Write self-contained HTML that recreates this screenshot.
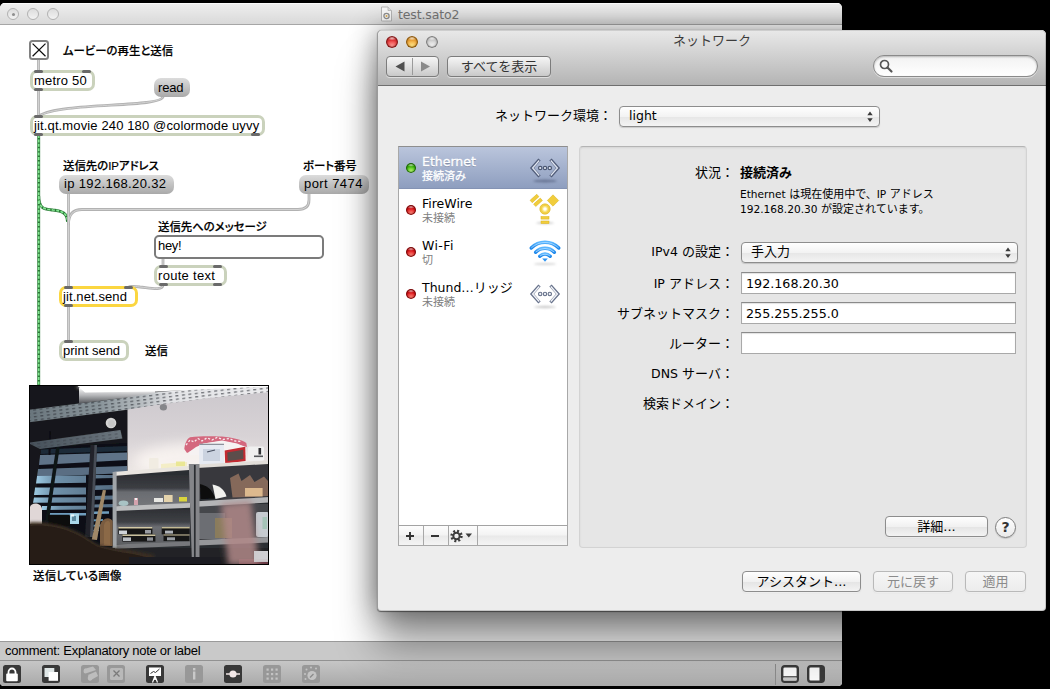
<!DOCTYPE html>
<html lang="ja">
<head>
<meta charset="utf-8">
<title>test.sato2</title>
<style>
*{box-sizing:border-box;margin:0;padding:0}
html,body{width:1050px;height:689px;overflow:hidden;background:#000}
body{position:relative;font-family:"Liberation Sans","Noto Sans CJK JP",sans-serif;color:#000}
.abs{position:absolute}
/* ---------- Max window ---------- */
#max{position:absolute;left:0;top:3px;width:842px;height:683px;background:#fff;border-radius:5px 5px 4px 4px;overflow:hidden}
#max .tbar{position:absolute;left:0;top:0;width:842px;height:22px;background:linear-gradient(#efefef,#d9d9d9);border-bottom:1px solid #a6a6a6;box-shadow:inset 0 1px 0 #fafafa}
#max .tl{position:absolute;top:5px;width:12px;height:12px;border-radius:50%;border:1px solid #b1b1b1;background:linear-gradient(#dcdcdc,#f2f2f2)}
#max .title{position:absolute;left:398px;top:4px;font-family:"DejaVu Sans","Liberation Sans",sans-serif;font-size:12.5px;line-height:16px;color:#757575;white-space:nowrap;letter-spacing:-.13px}
#max .status{position:absolute;left:0;top:638px;width:842px;height:19px;background:#c9c9c9;border-top:1px solid #9a9a9a;font-size:13px;line-height:18px;padding-left:5px;white-space:nowrap}
#max .tools{position:absolute;left:0;top:657px;width:842px;height:26px;background:linear-gradient(#c6c6c6,#a9a9a9);border-top:1px solid #929292}
.ico{position:absolute;top:4px;width:18px;height:18px;border-radius:3px;background:#333}
.ico.l{background:#9a9a9a}
/* patch objects */
.obj{position:absolute;height:21px;border:3px solid #cad2bc;border-radius:7px;background:#fff;font-size:13px;line-height:15px;padding-left:1px;white-space:nowrap}
.msg{position:absolute;height:19px;border-radius:7px;background:linear-gradient(#dcdcdc,#a9a9a9);font-size:13px;line-height:18px;padding-left:5px;white-space:nowrap}
.cmt{position:absolute;font-size:11.4px;line-height:14px;white-space:nowrap;font-weight:500;font-feature-settings:"palt";-webkit-text-stroke:.2px #000}
.io{position:absolute;width:9px;height:3px;border-radius:1.5px;background:#6a6a6a}

/* ---------- Network window ---------- */
#net{font-family:"DejaVu Sans","Liberation Sans","Noto Sans CJK JP",sans-serif;position:absolute;left:377px;top:30px;width:669px;height:581px;border-left:1px solid #b9b9b9;background:#ededed;border-radius:5px 5px 4px 4px;box-shadow:0 34px 40px rgba(0,0,0,.4),0 0 28px rgba(0,0,0,.45),0 .5px 1px rgba(0,0,0,.45);font-size:13px}
#net::after{content:'';position:absolute;left:-1px;top:0;right:0;bottom:0;border-radius:5px 5px 4px 4px;box-shadow:inset 0 0 0 1px rgba(0,0,0,.16);pointer-events:none}
#net .nbar{position:absolute;left:0;top:0;width:668px;height:56px;border-radius:5px 5px 0 0;background:linear-gradient(#e9e9e9,#b4b4b4);border-bottom:1px solid #6f6f6f;box-shadow:inset 0 1px 0 #f6f6f6}
#net .ntl{position:absolute;top:6px;width:12px;height:12px;border-radius:50%}
#net .ntitle{position:absolute;left:0;top:2px;width:668px;text-align:center;font-size:13px;line-height:18px;color:#3c3c3c}
.btn{position:absolute;height:21px;border:1px solid #8d8d8d;border-radius:4px;background:linear-gradient(#fefefe,#f1f1f1 50%,#e4e4e4 51%,#f3f3f3);box-shadow:0 1px 0 rgba(255,255,255,.6),0 1px 1px rgba(0,0,0,.12);text-align:center;font-size:13px;line-height:19px;white-space:nowrap}
.btn.dis{color:#8b8b8b;border-color:#b9b9b9;background:linear-gradient(#f6f6f6,#ececec)}
.tbtn{position:absolute;height:21px;border:1px solid #7c7c7c;border-radius:4px;background:linear-gradient(#f6f6f6,#c9c9c9);box-shadow:0 1px 0 rgba(255,255,255,.5);text-align:center;font-size:13px;line-height:19px;color:#333;white-space:nowrap}
.lbl{position:absolute;text-align:right;white-space:nowrap;font-size:13px;line-height:18px}
.fld{position:absolute;left:363px;width:275px;height:22px;background:#fff;border:1px solid #a9a9a9;border-top-color:#8a8a8a;font-size:13px;line-height:22px;padding-left:4px;box-shadow:inset 0 1px 1px rgba(0,0,0,.12)}
.pop{position:absolute;height:21px;border:1px solid #8d8d8d;border-radius:4px;background:linear-gradient(#fefefe,#f3f3f3 50%,#e6e6e6 51%,#f4f4f4);box-shadow:0 1px 1px rgba(0,0,0,.15);font-size:13px;line-height:18px;padding-left:9px;white-space:nowrap}
.pop svg{position:absolute;right:5px;top:3px}
.row{position:absolute;left:0;width:168px;height:42px}
.row .dot{position:absolute;left:7px;top:16px;width:10px;height:10px;border-radius:50%}
.row .n{position:absolute;left:23px;top:7px;font-size:13px;line-height:16px;white-space:nowrap}
.row .s{position:absolute;left:23px;top:23px;font-size:11px;line-height:13px;color:#808080;white-space:nowrap}
.red{background:radial-gradient(ellipse 42% 20% at 50% 18%,rgba(255,255,255,.75) 0,rgba(255,255,255,0) 100%),radial-gradient(ellipse 58% 48% at 50% 84%,#ff8f80 0,rgba(255,255,255,0) 100%),linear-gradient(#b80d12,#e3181c 55%);box-shadow:inset 0 0 0 1px rgba(110,0,0,.8),inset 0 0 2px 1px rgba(110,0,0,.8)}
.grn{background:radial-gradient(ellipse 42% 20% at 50% 18%,rgba(255,255,255,.75) 0,rgba(255,255,255,0) 100%),radial-gradient(ellipse 58% 48% at 50% 84%,#c4ff7a 0,rgba(255,255,255,0) 100%),linear-gradient(#2f9a08,#45c010 55%);box-shadow:inset 0 0 0 1px rgba(20,90,0,.8),inset 0 0 2px 1px rgba(20,90,0,.8)}
#net .la{font-size:12.5px}
#net .fld.la{font-size:12.7px}
</style>
</head>
<body>
<div id="max">
  <div class="tbar">
    <div class="tl" style="left:7px"><div class="abs" style="left:3.500px;top:3.500px;width:3px;height:3px;border-radius:50%;background:#8f8f8f"></div></div>
    <div class="tl" style="left:27px"></div>
    <div class="tl" style="left:47px"></div>
    <svg class="abs" style="left:380px;top:3px" width="13" height="16" viewBox="0 0 13 16"><path d="M1.500 1H8L11.500 4.500V15H1.500Z" fill="#f7f7f7" stroke="#b5b5b5" stroke-width="1"/><path d="M8 1V4.500H11.500" fill="#e2e2e2" stroke="#b5b5b5" stroke-width=".8"/><circle cx="6.500" cy="10" r="2.600" fill="none" stroke="#8f8f8f" stroke-width="1.300"/><circle cx="6.500" cy="10" r="1" fill="#d9a94a"/></svg>
    <div class="title">test.sato2</div>
  </div>
  <div id="patch" class="abs" style="left:0;top:-3px;width:842px;height:689px">
    <svg class="abs" style="left:0;top:0" width="842" height="689" viewBox="0 0 842 689" fill="none">
      <g stroke="#2a7936" stroke-width="2.900">
        <path d="M38.700 135V386"/>
        <path d="M38.700 196C38.700 210 46 209 53 210C62 211 67.500 213 67.500 222"/>
      </g>
      <g stroke="#84e592" stroke-width="1.700" stroke-dasharray="3 1.400">
        <path d="M38.700 135V386"/>
        <path d="M38.700 196C38.700 210 46 209 53 210C62 211 67.500 213 67.500 222"/>
      </g>
      <g stroke="#b2b2b2" stroke-width="2.800" stroke-linecap="round">
        <path d="M38.500 60V71"/>
        <path d="M38.5 90V116"/>
        <path d="M163 97C160 108 60 102 39 116"/>
        <path d="M68.5 194V288"/>
        <path d="M309 194V200Q309 209.500 298 209.500H82Q68.500 209.500 68.500 224"/>
        <path d="M163 258V266"/>
        <path d="M163 285C163 291 150 288 140 287C134 286 128 286 128 288"/>
        <path d="M68.5 306V342"/>
      </g>
      <g stroke="#d2d2d2" stroke-width="1" stroke-linecap="round">
        <path d="M38.500 60V71"/>
        <path d="M38.5 90V116"/>
        <path d="M163 97C160 108 60 102 39 116"/>
        <path d="M68.5 194V288"/>
        <path d="M309 194V200Q309 209.500 298 209.500H82Q68.500 209.500 68.500 224"/>
        <path d="M163 258V266"/>
        <path d="M163 285C163 291 150 288 140 287C134 286 128 286 128 288"/>
        <path d="M68.5 306V342"/>
      </g>
    </svg>
    <!-- toggle -->
    <div class="abs" style="left:29px;top:40px;width:20px;height:20px;border:2px solid #818181;border-radius:3.500px;background:#fff">
      <svg class="abs" style="left:0;top:0" width="16" height="16" viewBox="0 0 16 16"><path d="M1.600 1.600L14.500 14.300M14.500 1.600L1.600 14.300" stroke="#111" stroke-width="1.250"/></svg>
    </div>
    <div class="cmt" style="left:63px;top:44px">ムービーの再生と送信</div>
    <div class="obj" style="left:30px;top:70px;width:65px;letter-spacing:.19px">metro 50</div>
    <div class="io" style="left:34px;top:70px"></div><div class="io" style="left:82px;top:70px"></div><div class="io" style="left:34px;top:88px"></div>
    <div class="msg" style="left:154px;top:78px;width:36px;padding-left:4px;letter-spacing:-.2px;line-height:20px">read</div>
    <div class="obj" style="left:30px;top:115px;width:235px;letter-spacing:.13px">jit.qt.movie 240 180 @colormode uyvy</div>
    <div class="io" style="left:34px;top:115px"></div><div class="io" style="left:34px;top:133px"></div><div class="io" style="left:251px;top:133px"></div>
    <div class="cmt" style="left:63px;top:159px">送信先のIPアドレス</div>
    <div class="msg" style="left:59px;top:175px;width:115px;letter-spacing:.34px">ip 192.168.20.32</div>
    <div class="cmt" style="left:303px;top:159px">ポート番号</div>
    <div class="msg" style="left:299px;top:175px;width:70px;letter-spacing:.43px">port 7474</div>
    <div class="cmt" style="left:158px;top:220px">送信先へのメッセージ</div>
    <div class="abs" style="left:154px;top:235px;width:170px;height:24px;border:2px solid #7b7b7b;border-radius:5px;background:#fff;font-size:13px;line-height:18px;padding-left:2px;letter-spacing:-.3px">hey!</div>
    <div class="obj" style="left:154px;top:265px;width:73px;letter-spacing:.3px">route text</div>
    <div class="io" style="left:159px;top:265px"></div><div class="io" style="left:213px;top:265px"></div><div class="io" style="left:159px;top:283px"></div><div class="io" style="left:213px;top:283px"></div>
    <div class="obj" style="left:59px;top:286px;width:79px;border-color:#fbd640;letter-spacing:.09px">jit.net.send</div>
    <div class="io" style="left:64px;top:286px"></div><div class="io" style="left:124px;top:286px"></div><div class="io" style="left:64px;top:304px"></div>
    <div class="obj" style="left:59px;top:340px;width:70px">print send</div>
    <div class="io" style="left:64px;top:340px"></div>
    <div class="cmt" style="left:145px;top:344px">送信</div>
    <!--PHOTO--><svg class="abs" style="left:29px;top:385px" width="240" height="180" viewBox="0 0 240 180">
  <defs>
    <filter id="b1" x="-5%" y="-5%" width="110%" height="110%"><feGaussianBlur stdDeviation="0.650"/></filter>
    <filter id="b2" x="-20%" y="-20%" width="140%" height="140%"><feGaussianBlur stdDeviation="1.600"/></filter>
    <filter id="b3" x="-20%" y="-20%" width="140%" height="140%"><feGaussianBlur stdDeviation="3"/></filter>
    <filter id="b6" x="-30%" y="-30%" width="160%" height="160%"><feGaussianBlur stdDeviation="6"/></filter>
    <pattern id="perf" width="6.500" height="3.400" patternUnits="userSpaceOnUse" patternTransform="rotate(-7)"><rect x="1" y="1" width="3" height="1.100" fill="#2c3036" opacity=".75"/></pattern>
    <linearGradient id="tray" x1="0" y1="0" x2="1" y2="0"><stop offset="0" stop-color="#69757c"/><stop offset=".3" stop-color="#8a959b"/><stop offset=".45" stop-color="#b2b8bc"/><stop offset=".6" stop-color="#e2e3e6"/><stop offset="1" stop-color="#ececee"/></linearGradient>
    <linearGradient id="tray2" x1="0" y1="0" x2="1" y2="0"><stop offset="0" stop-color="#46505a"/><stop offset="1" stop-color="#6c767e"/></linearGradient>
    <linearGradient id="wall" x1="0" y1="0" x2="0" y2="1"><stop offset="0" stop-color="#cbc7cc"/><stop offset=".55" stop-color="#d8d3d6"/><stop offset="1" stop-color="#efe9e6"/></linearGradient>
    <linearGradient id="cellL" x1="0" y1="0" x2="0" y2="1"><stop offset="0" stop-color="#2e3034"/><stop offset=".42" stop-color="#3c3e43"/><stop offset=".55" stop-color="#6a6c71"/><stop offset="1" stop-color="#74767a"/></linearGradient>
    <linearGradient id="cellM" x1="0" y1="0" x2="0" y2="1"><stop offset="0" stop-color="#303236"/><stop offset=".35" stop-color="#3e4045"/><stop offset=".5" stop-color="#6c6e73"/><stop offset="1" stop-color="#5c5e62"/></linearGradient>
    <linearGradient id="stripe" x1="0" y1="0" x2="1" y2="0"><stop offset="0" stop-color="#9cc9e2"/><stop offset=".25" stop-color="#6f91aa"/><stop offset="1" stop-color="#566c82"/></linearGradient>
    <linearGradient id="glow" x1="0" y1="0" x2="0" y2="1"><stop offset="0" stop-color="#f4f4f4"/><stop offset=".45" stop-color="#b9babd"/><stop offset="1" stop-color="#55575b"/></linearGradient>
    <clipPath id="pc"><rect x="1" y="1" width="238" height="178"/></clipPath>
  </defs>
  <rect width="240" height="180" fill="#000"/>
  <g clip-path="url(#pc)"><g filter="url(#b1)">
    <rect x="0" y="0" width="240" height="180" fill="#19191c"/>
    <!-- wall -->
    <path d="M98.500 10L240 0V92L98.500 94Z" fill="url(#wall)"/>
    <ellipse cx="165" cy="76" rx="60" ry="18" fill="#fffaf6" opacity=".7" filter="url(#b6)"/>
    <!-- window blinds -->
    <path d="M12 62L98 58V162H2Z" fill="#0b0f16"/>
    <path d="M12 64.500L98 61V66L11.500 69Z" fill="#1d2a38"/>
    <g fill="#7d92a7">
      <path d="M11 70L98 67.500V75L10 80Z" fill="#5f7388"/>
      <path d="M9 84L98 81V88L8 92Z" fill="#5a6e83"/>
      <path d="M8 91L57 90.500V97.800L7 98.500Z M64 90V93.500L84 93V90Z" fill="url(#stripe)"/>
      <path d="M6 102.500L57 102.400V109.600L5 110Z M64 100.400L84 100V104.600L64 105Z" fill="url(#stripe)"/>
      <path d="M5 112.500L57 112.200V117.400L4 117.800Z M64 110.900L84 110.500V114.400L64 114.800Z" fill="url(#stripe)"/>
      <path d="M13 121L57 120.700V124.600L13 125Z M64 119.400L84 119V122.300L64 122.600Z" fill="url(#stripe)"/>
      <path d="M20 128L57 127.900V130.500L20 130.700Z M64 126.500L80 126.300V128.800L64 129Z" fill="#6f9dbd"/>
      <path d="M58 134.500L74 134V136L58 136.500Z M58 140L72 139.600V141.400L58 141.800Z M58 145L70 144.700V146L58 146.300Z" fill="#5f8fae"/>
    </g>
    <!-- mullions -->
    <path d="M61.500 60H68L64 152H56Z" fill="#20242a"/><path d="M65.500 60H68L64 152H61Z" fill="#464c54"/>
    <path d="M27.500 60H31L19.600 138H15.700Z" fill="#111317"/>
    <path d="M20 46H22L21.500 70H19.500Z" fill="#0e0f12"/>
    <path d="M0 58L12 62L3 120H0Z" fill="#16171a"/>
    <!-- second tray -->
    <path d="M1 57.500L91.400 45L93.400 53.500L11 64L1 59Z" fill="url(#tray2)"/>
    <path d="M1 57.500L91.400 45L93.400 53.500L11 64L1 59Z" fill="url(#perf)" opacity=".55"/>
    <!-- upper tray -->
    <path d="M0 24.800L98 12.400L120 7.800L180 3L240 0.500V7.200L180 13L120 21L98 24.800L0 37.200Z" fill="url(#tray)"/>
    <path d="M0 24.800L98 12.400L120 7.800L180 3L240 0.500V7.200L180 13L120 21L98 24.800L0 37.200Z" fill="url(#perf)"/>
    <!-- ceiling light -->
    <path d="M50 3L126 3V8L98 12.400L50 18.500Z" fill="url(#glow)" filter="url(#b1)"/>
    <path d="M47.500 0H240V1.500L125 6.500L56 7.500Z" fill="#fff"/>
    <ellipse cx="110" cy="2" rx="62" ry="4.500" fill="#fff" opacity=".75" filter="url(#b2)"/>
    <!-- smoke detector and dome -->
    <circle cx="82" cy="38" r="5.300" fill="#d4d4d4"/><circle cx="82.500" cy="38.500" r="3.400" fill="#c6c6c6"/>
    <ellipse cx="134.400" cy="22.300" rx="3.600" ry="3.200" fill="#85868a"/>
    <!-- shelf unit back -->
    <path d="M86 88L240 77V180H86Z" fill="#2c2e32"/>
    <rect x="87" y="90" width="74" height="31" fill="url(#cellL)"/>
    <rect x="87" y="125" width="74" height="34" fill="url(#cellM)"/>
    <rect x="168" y="80" width="72" height="34" fill="#37393e"/>
    <path d="M168 119H240V154H168Z" fill="#45474c"/>
    <rect x="170" y="128" width="26" height="26" fill="#6c6e73"/>
    <rect x="87" y="163" width="153" height="17" fill="#232427"/>
    <!-- items on top of shelf (left) -->
    <rect x="120" y="73" width="9.500" height="11" rx="1" fill="#f1ece2"/>
    <path d="M132 79L158 77V82L132 84Z" fill="#f3ecc0" opacity=".85"/>
    <rect x="147" y="76.500" width="9" height="4.500" fill="#e9e58e" opacity=".9"/>
    <!-- cloth + boxes -->
    <path d="M155.300 64C156 58 158 53.500 161 52.200C172 50.800 184 51.200 193 51.600C204 52.600 213 55 217.300 58L218 62L206 58.500L193 56L174 58.500L166 64L158 68Z" fill="#d4687e"/>
    <path d="M157 60L161 55L165 57L169 53.500L173 56L178 52.800L183 55L188 52.500L194 54.500L200 53.500L206 56L212 56.500" fill="none" stroke="#f6e9ec" stroke-width="1.300" stroke-dasharray="2.200 1.800"/>
    <path d="M160 67L167 62L175 58.500L193 55.500L208 58.500L217 62.500V70H160Z" fill="#f6f2f2"/>
    <rect x="170.300" y="58.800" width="24.700" height="21" fill="#e6eaf2"/><path d="M170.300 59.300H195" stroke="#6a6e78" stroke-width=".9"/>
    <rect x="174" y="64" width="17" height="12" fill="#cbd3e0"/><path d="M178 67L186 65" stroke="#4a5262" stroke-width="1.200"/>
    <path d="M195.700 65.500L216.300 61.800L216.600 76L196.200 78.500Z" fill="#c22a30"/>
    <path d="M198.300 67.500L214.200 64.700L214.400 74L198.700 76Z" fill="#5b4e4c"/>
    <rect x="219" y="61.400" width="16" height="14.300" rx="1.500" fill="#f0f0f0"/><rect x="229.500" y="63" width="2.600" height="6.500" fill="#2e2e30"/><rect x="225" y="70.500" width="9" height="1.600" fill="#55565a"/>
    <!-- shelves -->
    <path d="M84 87L160 81V85L84 91Z" fill="#e9e5df"/>
    <path d="M167.700 79.500L240 75.500V79L167.700 83Z" fill="#e2ded9"/>
    <path d="M86 121.300L161 118V122.800L86 126Z" fill="#bdbebf"/>
    <path d="M168 116.200L240 112V117.500L168 121.700Z" fill="#b4b5b7"/>
    <path d="M86 159.500L161 156.500V160.800L86 163.800Z" fill="#77787b"/>
    <path d="M168 155L240 152V157.500L168 160.500Z" fill="#96979a"/>
    <!-- posts -->
    <rect x="83.600" y="87" width="4" height="76" fill="#a1a5a9"/>
    <path d="M159.800 79H170.500V180H163Z" fill="#85868a"/><path d="M165.800 80V180" stroke="#2c2d30" stroke-width="1.700"/>
    <!-- items in cells -->
    <ellipse cx="94.500" cy="118.200" rx="4.800" ry="2.700" fill="#a9c3c4"/>
    <rect x="105" y="113" width="4" height="7" fill="#d4a3ad"/><rect x="106" y="113" width="2" height="2" fill="#f3f3f3"/>
    <rect x="125" y="113" width="9" height="4" fill="#e8e8e4"/>
    <rect x="135" y="110" width="8.600" height="7" fill="#e4d3ac"/>
    <rect x="150" y="112" width="8" height="4.500" fill="#d9d43c"/>
    <g>
      <rect x="89.400" y="142" width="34" height="7.400" fill="#121212"/><rect x="93.400" y="149.400" width="33" height="7.200" fill="#161616"/>
      <path d="M89.400 142.800H123.400" stroke="#d3c9a6" stroke-width="1.600"/><path d="M93.400 150.200H126.400" stroke="#c9bf9c" stroke-width="1.500"/>
      <rect x="90" y="145.500" width="8" height="3.600" fill="#cfd3d8"/><rect x="94" y="152.400" width="8" height="3.600" fill="#b9bdc2"/>
      <rect x="116" y="145" width="6" height="3.500" fill="#9a9da3"/><rect x="118" y="152.400" width="6" height="3.300" fill="#8d9096"/>
      <rect x="132.700" y="142" width="28" height="7.300" fill="#121212"/><rect x="134.500" y="149.300" width="26" height="6.800" fill="#161616"/>
      <path d="M132.700 142.700H160.700" stroke="#c3b994" stroke-width="1.500"/><path d="M134.500 150H160.500" stroke="#a89e80" stroke-width="1.300"/>
      <rect x="136" y="145.600" width="8" height="3" fill="#aeb2b8"/><rect x="138" y="152.300" width="8" height="3" fill="#9a9ea4"/>
    </g>
    <path d="M171 99C180 101 184.500 107 186 113.800L171.500 114Z" fill="#0c0c0e"/>
    <path d="M183.500 99.500C192 101 196 106 197.500 111.500L186.500 114Z" fill="#f1f1ee"/>
    <path d="M201 93L209.500 88.500L212.500 96L221 90L225.500 97L235 91.500L239 96V111L203.500 112.500Z" fill="#85695a"/>
    <rect x="216" y="103" width="17.600" height="8.500" fill="#dcb98e"/>
    <rect x="186" y="133" width="17" height="20" fill="#8a7c5c"/>
    <rect x="227" y="127" width="13" height="25" rx="2" fill="#c6cbd0"/><rect x="233.500" y="132" width="4.500" height="12" fill="#8fc0a8" opacity=".6"/>
    <rect x="225" y="166" width="14" height="10" fill="#cfcfd3"/>
    <path d="M210 174H240V180H210Z" fill="#9a4a58" opacity=".6"/>
    <!-- pink blur (finger) -->
    
    <!-- stick and brown object -->
    <path d="M73.800 105L77 105.300L68 155L62.700 154.500Z" fill="#a08868"/>
    <path d="M71 161V141C72 134 80 130.500 83.600 136V161Z" fill="#7a5c40"/><path d="M75 160V140C76 136 80 134.500 81 138V160Z" fill="#8b6947"/>
    <!-- monitor -->
    <rect x="19.600" y="129.800" width="21" height="11" fill="#09090b"/>
    <rect x="41" y="128.500" width="9" height="10.500" fill="#a9d7ea"/><rect x="43" y="131" width="4" height="5" fill="#5d8aa0"/><rect x="42" y="129.500" width="3" height="2" fill="#e9f7fc"/>
    <!-- white object at left -->
    <path d="M1 122C2 117.500 11.500 117 13 123.500V139H1Z" fill="#e0d7d7"/>
    <!-- dark hair blob -->
    <path d="M0 137.500C14 136.500 26 138.500 38 142.500C50 147 58 152 66 158C74 162 84 163.500 100 165L125 170V180H0Z" fill="#3a2d24" filter="url(#b2)"/>
    <path d="M0 141C16 139.500 30 142 42 147C54 152 60 157 68 161.500C78 165 90 167 104 169L130 175V180H0Z" fill="#261d17" filter="url(#b1)"/>
    <rect x="100" y="172" width="100" height="8" fill="#1e1e21"/>
    <path d="M192 119L222 116L230 180H199Z" fill="#b08888" opacity=".85" filter="url(#b3)"/>
    <rect x="225" y="166" width="14" height="11" fill="#cfcfd3" opacity=".9"/>
  </g></g>
  <rect x=".5" y=".5" width="239" height="179" fill="none" stroke="#000" stroke-width="1"/>
</svg><!--/PHOTO-->
    <div class="cmt" style="left:33px;top:569px;letter-spacing:.3px">送信している画像</div>
  </div>
  <div class="status" style="letter-spacing:-.27px">comment: Explanatory note or label</div>
  <div class="tools">
    <svg class="abs" style="left:0;top:0" width="842" height="26" viewBox="0 0 842 26">
      <g fill="#383838">
        <rect x="3" y="4" width="18" height="18" rx="2.500"/><rect x="42" y="4" width="18" height="18" rx="2.500"/>
        <rect x="146" y="4" width="18" height="18" rx="2.500"/><rect x="224" y="4" width="18" height="18" rx="2.500"/>
      </g>
      <g fill="#989898">
        <rect x="81" y="4" width="18" height="18" rx="2.500"/><rect x="107" y="4" width="18" height="18" rx="2.500"/>
        <rect x="185" y="4" width="18" height="18" rx="2.500"/><rect x="263" y="4" width="18" height="18" rx="2.500"/><rect x="302" y="4" width="18" height="18" rx="2.500"/>
      </g>
      <!-- lock -->
      <rect x="6.200" y="12.600" width="11.600" height="7.600" rx="1" fill="#fff"/>
      <path d="M8.500 13V11A3.500 3.500 0 0 1 15.500 11V13" fill="none" stroke="#fff" stroke-width="1.800"/>
      <!-- overlapping squares -->
      <rect x="44.500" y="7" width="9.800" height="9" fill="#dfe6e6"/><rect x="48.600" y="11" width="9.400" height="8.800" fill="#fff"/>
      <!-- binoculars -->
      <g fill="#bdbdbd"><path d="M84 8L93 5.500L96 9L87 12Z"/><ellipse cx="85.500" cy="10" rx="2" ry="2.600"/><path d="M88 14L96 10.500L98 15L91 19Z"/><ellipse cx="90" cy="17" rx="2.200" ry="2.800"/></g>
      <!-- x box -->
      <rect x="110" y="7" width="13" height="12" rx="1.500" fill="#b9b9b9"/><path d="M113.500 9.500L119.500 15.500M119.500 9.500L113.500 15.500" stroke="#7a7a7a" stroke-width="1.300"/>
      <!-- presentation -->
      <rect x="149" y="6.500" width="12" height="8.500" fill="#fff"/><path d="M150.500 12.500L153.500 10.500L155.500 11.500L159.500 8" fill="none" stroke="#333" stroke-width="1"/>
      <path d="M155 15L152.500 21.500M155 15L157.500 21.500M155 15V19" stroke="#fff" stroke-width="1.200" fill="none"/>
      <!-- info -->
      <rect x="193" y="10.500" width="2.400" height="8" fill="#c9c9c9"/><rect x="193" y="7" width="2.400" height="2.400" fill="#c9c9c9"/>
      <!-- line with circle -->
      <path d="M226 13H240" stroke="#f1e6e6" stroke-width="1.600"/><circle cx="233" cy="13" r="3.600" fill="#f1e6e6"/>
      <!-- grid -->
      <g fill="#c4c4c4"><rect x="266.500" y="7.500" width="2.200" height="2.200"/><rect x="271" y="7.500" width="2.200" height="2.200"/><rect x="275.500" y="7.500" width="2.200" height="2.200"/><rect x="266.500" y="12" width="2.200" height="2.200"/><rect x="271" y="12" width="2.200" height="2.200"/><rect x="275.500" y="12" width="2.200" height="2.200"/><rect x="266.500" y="16.500" width="2.200" height="2.200"/><rect x="271" y="16.500" width="2.200" height="2.200"/><rect x="275.500" y="16.500" width="2.200" height="2.200"/></g>
      <!-- dial -->
      <circle cx="312" cy="14.500" r="4.600" fill="#c4c4c4"/><path d="M310 16.500L313.500 13" stroke="#8a8a8a" stroke-width="1.200"/>
      <g fill="#c4c4c4"><circle cx="305" cy="13" r="1"/><circle cx="306.500" cy="8.500" r="1"/><circle cx="311" cy="6.500" r="1"/><circle cx="316" cy="7.500" r="1"/><circle cx="305.500" cy="18" r="1"/></g>
      <!-- right side -->
      <path d="M775.500 3V24" stroke="#8c8c8c" stroke-width="1"/>
      <rect x="782.200" y="5.200" width="15.600" height="15.600" rx="2.500" fill="#fafafa" stroke="#3a3a3a" stroke-width="2.400"/><rect x="783" y="15.200" width="14" height="1.400" fill="#3a3a3a"/><rect x="783.400" y="16.600" width="13.200" height="3" fill="#c9c9c9"/>
      <rect x="808.200" y="5.200" width="15.600" height="15.600" rx="2.500" fill="#fafafa" stroke="#3a3a3a" stroke-width="2.400"/><rect x="819.500" y="6" width="4" height="14" fill="#3a3a3a"/>
    </svg>
  </div>
</div>
<div id="net">
  <div class="nbar">
    <div class="ntl" style="left:8px;background:radial-gradient(ellipse 42% 20% at 50% 17%,rgba(255,255,255,.8) 0,rgba(255,255,255,0) 100%),radial-gradient(ellipse 58% 48% at 50% 84%,#ffa09a 0,rgba(255,255,255,0) 100%),linear-gradient(#c9292c,#ea3b3d 55%);box-shadow:inset 0 0 0 1px rgba(120,20,20,.85),inset 0 0 2px 1px rgba(120,20,20,.85)"></div>
    <div class="ntl" style="left:28px;background:radial-gradient(ellipse 42% 20% at 50% 17%,rgba(255,255,255,.8) 0,rgba(255,255,255,0) 100%),radial-gradient(ellipse 58% 48% at 50% 84%,#ffe98c 0,rgba(255,255,255,0) 100%),linear-gradient(#d8902a,#f2a93c 55%);box-shadow:inset 0 0 0 1px rgba(130,80,8,.85),inset 0 0 2px 1px rgba(130,80,8,.85)"></div>
    <div class="ntl" style="left:48px;background:radial-gradient(ellipse 42% 20% at 50% 17%,rgba(255,255,255,.8) 0,rgba(255,255,255,0) 100%),radial-gradient(ellipse 58% 48% at 50% 84%,#f4f4f4 0,rgba(255,255,255,0) 100%),linear-gradient(#bdbdbd,#d2d2d2 55%);box-shadow:inset 0 0 0 1px rgba(120,120,120,.85),inset 0 0 2px 1px rgba(120,120,120,.85)"></div>
    <div class="ntitle">ネットワーク</div>
    <div class="tbtn" style="left:8px;top:26px;width:53px">
      <svg class="abs" style="left:0;top:0" width="51" height="19" viewBox="0 0 51 19"><path d="M17.500 4.500V14.500L8.500 9.500Z" fill="#505050"/><path d="M34 4.500V14.500L43 9.500Z" fill="#8a8a8a"/><path d="M25.500 1V18" stroke="#9a9a9a" stroke-width="1"/></svg>
    </div>
    <div class="tbtn" style="left:69px;top:26px;width:104px">すべてを表示</div>
    <div class="abs" style="left:495px;top:25px;width:165px;height:22px;border-radius:11px;border:1px solid #8a8a8a;background:linear-gradient(#f2f2f2,#fff);box-shadow:inset 0 1px 2px rgba(0,0,0,.25),0 1px 0 rgba(255,255,255,.5)">
      <svg class="abs" style="left:4px;top:2px" width="16" height="16" viewBox="0 0 16 16" fill="none"><circle cx="6.500" cy="6.500" r="4" stroke="#555" stroke-width="1.700"/><path d="M9.500 9.500L13.500 13.500" stroke="#555" stroke-width="2.200" stroke-linecap="round"/></svg>
    </div>
  </div>
  <div class="lbl" style="left:58px;top:77px;width:176px">ネットワーク環境：</div>
  <div class="pop" style="left:241px;top:76px;width:261px"><span class="la">light</span><svg width="8" height="13" viewBox="0 0 8 13"><path d="M4 1.500L6.700 5.300H1.300Z M4 12L6.700 8.200H1.300Z" fill="#3a3a3a"/></svg></div>
  <!-- sidebar -->
  <div class="abs" style="left:20px;top:116px;width:170px;height:400px;background:#fff;border:1px solid #a8a8a8;border-top-color:#8e8e8e">
    <div class="row" style="top:0;background:linear-gradient(#bac5dc,#8e9ebf);color:#fff;border-bottom:1px solid #8493b4">
      <div class="dot grn"></div><div class="n la" style="text-shadow:0 1px 0 rgba(0,0,0,.2);-webkit-text-stroke:.3px #fff">Ethernet</div><div class="s" style="color:#fff;-webkit-text-stroke:.25px #fff">接続済み</div>
    </div>
    <div class="row" style="top:42px"><div class="dot red"></div><div class="n la">FireWire</div><div class="s">未接続</div></div>
    <div class="row" style="top:84px"><div class="dot red"></div><div class="n la" style="letter-spacing:.4px">Wi-Fi</div><div class="s">切</div></div>
    <div class="row" style="top:126px"><div class="dot red"></div><div class="n"><span class="la">Thund…</span>リッジ</div><div class="s">未接続</div></div>
    <svg class="abs" style="left:128px;top:0" width="38" height="168" viewBox="0 0 38 168" fill="none">
      <defs><filter id="ib" x="-20%" y="-200%" width="140%" height="500%"><feGaussianBlur stdDeviation="1"/></filter>
      <linearGradient id="wf" x1="0" y1="0" x2="0" y2="1"><stop offset="0" stop-color="#5ab6ff"/><stop offset="1" stop-color="#1b86ea"/></linearGradient></defs>
      <!-- ethernet (selected) -->
      <g transform="translate(0 0)">
        <ellipse cx="18" cy="34" rx="12" ry="1.500" fill="#3f4a68" opacity=".5" filter="url(#ib)"/>
        <path d="M12.500 12.500L5 21L12.500 29.500" stroke="#505c78" stroke-width="3.100" stroke-linejoin="miter"/>
        <path d="M12.200 13.500L5.600 21L12.200 28.500" stroke="#dfe5f1" stroke-width="1.300"/>
        <path d="M23.500 12.500L31 21L23.500 29.500" stroke="#505c78" stroke-width="3.100" stroke-linejoin="miter"/>
        <path d="M23.800 13.500L30.400 21L23.800 28.500" stroke="#dfe5f1" stroke-width="1.300"/>
        <g stroke="#4c5872" stroke-width="1.200" fill="#e3e8f2"><circle cx="13.200" cy="21" r="1.700"/><circle cx="18" cy="21" r="1.700"/><circle cx="22.800" cy="21" r="1.700"/></g>
      </g>
      <!-- firewire -->
      <g transform="translate(0 42)">
        <ellipse cx="18" cy="34" rx="9" ry="1.200" fill="#777" opacity=".35" filter="url(#ib)"/>
        <g fill="#f1cd3c" stroke="#d9b21f" stroke-width=".5">
          <rect x="-4.500" y="-1.600" width="9" height="3.200" transform="translate(7.500 9.500) rotate(-42)"/>
          <rect x="-4.500" y="-1.600" width="9" height="3.200" transform="translate(11 13.300) rotate(-42)"/>
          <rect x="-4" y="-4" width="8" height="8" transform="translate(26 11.500) rotate(45)"/>
          <rect x="14" y="27.500" width="8" height="2.600"/><rect x="14" y="32" width="8" height="2.600"/>
        </g>
        <circle cx="18" cy="20" r="5.200" fill="#f3d148" stroke="#d9b21f" stroke-width=".6"/><circle cx="18" cy="20" r="2.900" fill="#fbe88a"/><circle cx="18" cy="20" r="1.800" fill="#fff"/>
      </g>
      <!-- wifi -->
      <g transform="translate(0 84)" stroke="url(#wf)" stroke-width="3.400" stroke-linecap="round">
        <ellipse cx="18" cy="33" rx="11" ry="1" fill="#888" stroke="none" opacity=".35" filter="url(#ib)"/>
        <path d="M4.200 17A19.500 19.500 0 0 1 31.800 17"/>
        <path d="M8.600 21.200A13.300 13.300 0 0 1 27.400 21.200"/>
        <path d="M12.800 25.200A7.400 7.400 0 0 1 23.200 25.200"/>
        <path d="M15.200 27.600H20.800L18 30.800Z" fill="#2b93f2" stroke="none"/>
        <g stroke="#bfe3ff" stroke-width=".9" opacity=".8"><path d="M4.600 16.600A19.500 19.500 0 0 1 31.400 16.600"/><path d="M9 20.800A13.300 13.300 0 0 1 27 20.800"/><path d="M13.200 24.800A7.400 7.400 0 0 1 22.800 24.800"/></g>
      </g>
      <!-- thunderbolt bridge -->
      <g transform="translate(0 126)">
        <ellipse cx="18" cy="34" rx="11" ry="1.200" fill="#555" opacity=".3" filter="url(#ib)"/>
        <path d="M12.500 12.500L5 21L12.500 29.500" stroke="#66718a" stroke-width="3.100" stroke-linejoin="miter"/>
        <path d="M12.200 13.500L5.600 21L12.200 28.500" stroke="#f2f4f9" stroke-width="1.400"/>
        <path d="M23.500 12.500L31 21L23.500 29.500" stroke="#66718a" stroke-width="3.100" stroke-linejoin="miter"/>
        <path d="M23.800 13.500L30.400 21L23.800 28.500" stroke="#f2f4f9" stroke-width="1.400"/>
        <g stroke="#66718a" stroke-width="1.100" fill="#eef1f6"><circle cx="13.200" cy="21" r="1.700"/><circle cx="18" cy="21" r="1.700"/><circle cx="22.800" cy="21" r="1.700"/></g>
      </g>
    </svg>
    <div class="abs" style="left:0;top:378px;width:168px;height:20px;border-top:1px solid #a3a3a3;background:linear-gradient(#fdfdfd,#f3f3f3 48%,#e9e9e9 52%,#f4f4f4)">
      <div class="abs" style="left:24px;top:0;width:1px;height:19px;background:#a8a8a8"></div>
      <div class="abs" style="left:49px;top:0;width:1px;height:19px;background:#a8a8a8"></div>
      <div class="abs" style="left:78px;top:0;width:1px;height:19px;background:#a8a8a8"></div>
      <svg class="abs" style="left:-1px;top:0" width="80" height="19" viewBox="0 0 80 19"><path d="M8 10H16M12 6V14M33 10H41" stroke="#333" stroke-width="1.900"/>
        <circle cx="58.500" cy="10" r="4.600" fill="none" stroke="#3c3c3c" stroke-width="3.200" stroke-dasharray="1.800 1.813"/>
        <circle cx="58.500" cy="10" r="3.200" fill="none" stroke="#3c3c3c" stroke-width="2"/>
        <path d="M67.500 7.500H74L70.750 11.500Z" fill="#3c3c3c"/></svg>
    </div>
  </div>
  <!-- group box -->
  <div class="abs" style="left:201px;top:116px;width:448px;height:402px;background:#e6e6e6;border:1px solid #d3d3d3;border-top-color:#b4b4b4;border-radius:4px;box-shadow:inset 0 1px 2px rgba(0,0,0,.08)"></div>
  <div class="lbl" style="left:236px;top:134px;width:120px">状況：</div>
  <div class="abs" style="left:362px;top:134px;font-weight:bold;font-size:13px;line-height:18px">接続済み</div>
  <div class="abs" style="left:362px;top:157px;font-size:11px;line-height:14px;white-space:nowrap"><span style="font-size:10.6px">Ethernet</span> は現在使用中で、<span style="font-size:10.6px">IP</span> アドレス<br><span style="font-size:10.6px">192.168.20.30</span> が設定されています。</div>
  <div class="lbl" style="left:236px;top:213px;width:120px"><span class="la">IPv4</span> の設定：</div>
  <div class="pop" style="left:363px;top:212px;width:277px">手入力<svg width="8" height="13" viewBox="0 0 8 13"><path d="M4 1.500L6.700 5.300H1.300Z M4 12L6.700 8.200H1.300Z" fill="#3a3a3a"/></svg></div>
  <div class="lbl" style="left:236px;top:245px;width:120px"><span class="la">IP</span> アドレス：</div>
  <div class="fld la" style="top:242px">192.168.20.30</div>
  <div class="lbl" style="left:216px;top:275px;width:140px">サブネットマスク：</div>
  <div class="fld la" style="top:272px">255.255.255.0</div>
  <div class="lbl" style="left:236px;top:305px;width:120px">ルーター：</div>
  <div class="fld" style="top:302px"></div>
  <div class="lbl" style="left:236px;top:335px;width:120px"><span class="la">DNS</span> サーバ：</div>
  <div class="lbl" style="left:236px;top:365px;width:120px">検索ドメイン：</div>
  <div class="btn" style="left:507px;top:486px;width:103px">詳細...</div>
  <div class="abs" style="left:617px;top:487px;width:21px;height:21px;border-radius:50%;border:1px solid #7d7d7d;background:linear-gradient(#fff,#e9e9e9);text-align:center;font-weight:bold;font-size:14px;line-height:19px;color:#333;box-shadow:0 1px 1px rgba(0,0,0,.15)">?</div>
  <div class="btn" style="left:364px;top:541px;width:119px">アシスタント...</div>
  <div class="btn dis" style="left:495px;top:541px;width:80px">元に戻す</div>
  <div class="btn dis" style="left:587px;top:541px;width:61px">適用</div>
</div>
</body>
</html>
